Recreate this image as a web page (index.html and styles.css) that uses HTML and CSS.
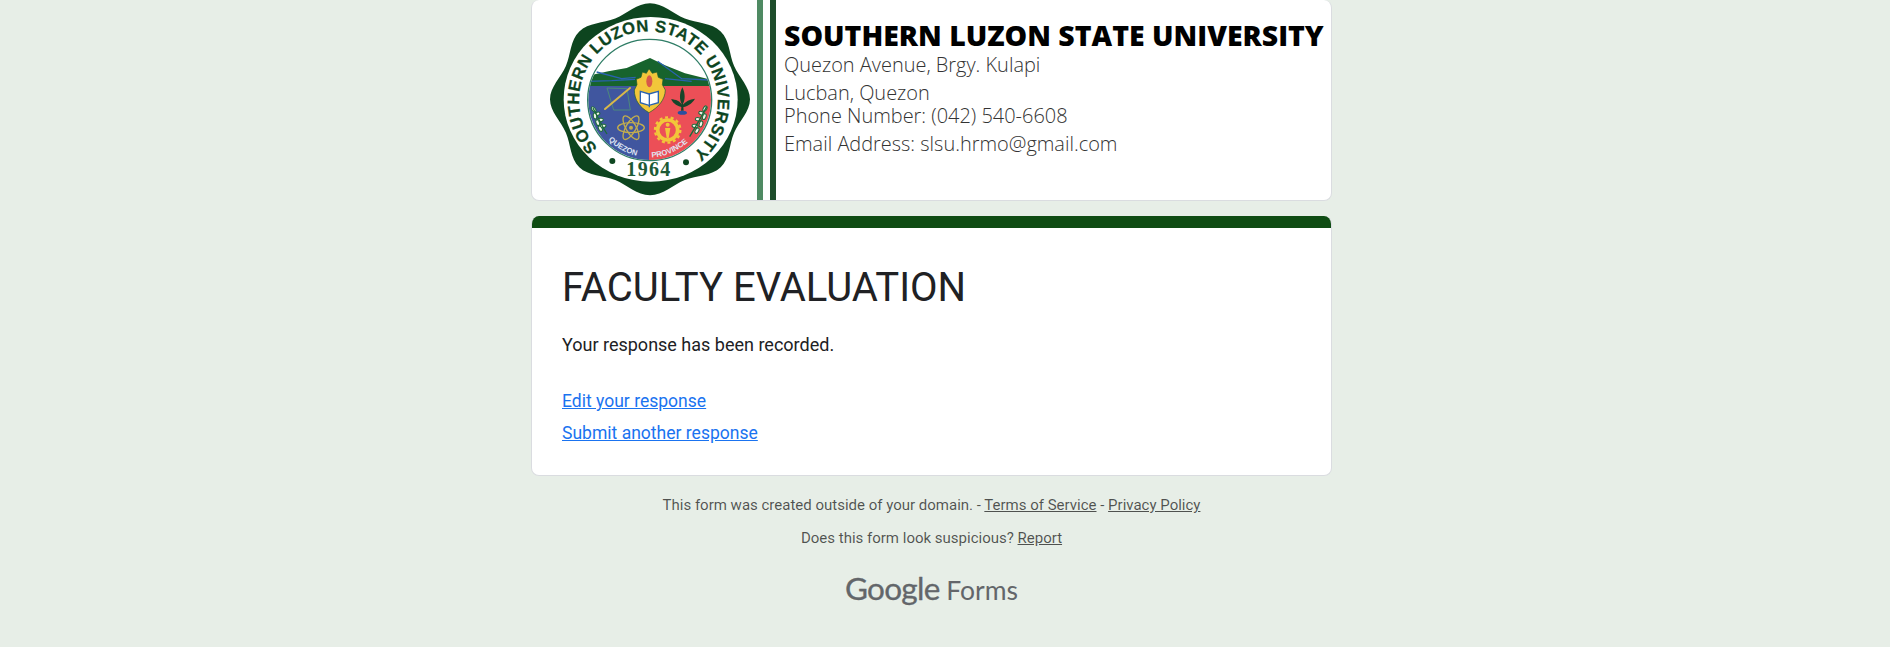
FILE: index.html
```html
<!DOCTYPE html>
<html lang="en">
<head>
    <meta charset="UTF-8">
    <meta name="viewport" content="width=device-width, initial-scale=1.0">
    <title>FACULTY EVALUATION</title>
    <link rel="stylesheet" href="styles.css">
</head>
<body>
    <div class="page">
        <header class="banner">
            <svg class="seal" viewBox="60 0 630 600" width="210" height="200" aria-label="University seal">
                <defs>
                    <clipPath id="shieldClip"><ellipse cx="374" cy="300" rx="184" ry="180"/></clipPath>
                    <path id="nameArc" d="M218 444 A208 208 0 1 1 496 468"/>
                    <path id="quezonArc" d="M250 420 A174 174 0 0 0 352 470"/>
                    <path id="provinceArc" d="M380 472 A172 172 0 0 0 502 412"/>
                    <ellipse id="leaf" rx="9" ry="5" fill="#eef3e8" stroke="#1c6b3a" stroke-width="3"/>
                </defs>
                <path class="seal-edge" transform="translate(375 298) scale(3 2.88)" d="M0 -100 C13 -100 22.8 -89.1 34.8 -84.1 C46.8 -79.1 61.5 -79.9 70.7 -70.7 C79.9 -61.5 79.1 -46.8 84.1 -34.8 C89.1 -22.8 100 -13 100 0 C100 13 89.1 22.8 84.1 34.8 C79.1 46.8 79.9 61.5 70.7 70.7 C61.5 79.9 46.8 79.1 34.8 84.1 C22.8 89.1 13 100 0 100 C-13 100 -22.8 89.1 -34.8 84.1 C-46.8 79.1 -61.5 79.9 -70.7 70.7 C-79.9 61.5 -79.1 46.8 -84.1 34.8 C-89.1 22.8 -100 13 -100 0 C-100 -13 -89.1 -22.8 -84.1 -34.8 C-79.1 -46.8 -79.9 -61.5 -70.7 -70.7 C-61.5 -79.9 -46.8 -79.1 -34.8 -84.1 C-22.8 -89.1 -13 -100 0 -100 Z"/>
                <ellipse cx="377" cy="298" rx="261" ry="247" fill="#fff"/>
                <text class="seal-name"><textPath href="#nameArc">SOUTHERN LUZON STATE UNIVERSITY</textPath></text>

                <g clip-path="url(#shieldClip)">
                    <rect x="180" y="110" width="390" height="150" fill="#fff"/>
                    <path fill="#17632d" d="M185 228 L250 214 L305 204 L375 174 L420 196 L480 220 L560 240 L560 262 L185 262 Z"/>
                    <path class="river" d="M215 216 L290 236 L332 232 M190 244 L260 242 L330 238"/>
                    <path class="river" d="M398 184 L470 236 L552 240 M420 236 L500 244"/>
                    <rect x="180" y="258" width="192" height="230" fill="#40569f"/>
                    <rect x="372" y="258" width="192" height="230" fill="#ec4f57"/>
                </g>
                <ellipse cx="374" cy="300" rx="186" ry="182" fill="none" stroke="#2f7d66" stroke-width="4"/>

                <!-- drafting tools -->
                <path d="M246 264 L306 266 L316 330 L266 330 Z" fill="none" stroke="#4d8a7a" stroke-width="3"/>
                <path d="M240 327 L315 264" stroke="#d9b84a" stroke-width="6" stroke-linecap="round"/>

                <!-- atom -->
                <g fill="none" stroke="#c2ad4e" stroke-width="4">
                    <ellipse cx="318" cy="383" rx="40" ry="15"/>
                    <ellipse cx="318" cy="383" rx="40" ry="15" transform="rotate(60 318 383)"/>
                    <ellipse cx="318" cy="383" rx="40" ry="15" transform="rotate(120 318 383)"/>
                </g>
                <circle cx="318" cy="383" r="6" fill="#c2ad4e"/>

                <!-- laurels -->
                <g>
                    <use href="#leaf" transform="translate(206 328) rotate(50)"/>
                    <use href="#leaf" transform="translate(216 342) rotate(-20)"/>
                    <use href="#leaf" transform="translate(210 348) rotate(80)"/>
                    <use href="#leaf" transform="translate(226 360) rotate(-10)"/>
                    <use href="#leaf" transform="translate(218 368) rotate(70)"/>
                    <use href="#leaf" transform="translate(234 378) rotate(-10)"/>
                    <use href="#leaf" transform="translate(226 386) rotate(60)"/>
                    <path d="M204 324 C218 350 232 380 246 402" fill="none" stroke="#1c6b3a" stroke-width="4"/>
                </g>
                <g>
                    <use href="#leaf" transform="translate(540 326) rotate(-60)"/>
                    <use href="#leaf" transform="translate(530 340) rotate(20)"/>
                    <use href="#leaf" transform="translate(538 350) rotate(-70)"/>
                    <use href="#leaf" transform="translate(520 358) rotate(10)"/>
                    <use href="#leaf" transform="translate(528 372) rotate(-70)"/>
                    <use href="#leaf" transform="translate(510 378) rotate(10)"/>
                    <use href="#leaf" transform="translate(516 392) rotate(-60)"/>
                    <path d="M545 320 C530 350 512 380 494 410" fill="none" stroke="#1c6b3a" stroke-width="4"/>
                </g>

                <!-- medallion -->
                <path fill="#f2c63a" stroke="#1c5a2d" stroke-width="2" d="M372 206 L382 220 L396 216 L400 232 L414 238 L412 254 L421 270 C420 300 400 322 372 338 C344 322 328 300 328 270 L336 254 L334 238 L348 232 L352 216 L364 220 Z"/>
                <ellipse cx="373" cy="244" rx="9" ry="18" fill="#d8584a"/>
                <path fill="#fff" stroke="#2a62b0" stroke-width="4" d="M346 274 L372 282 L400 274 L400 308 L372 316 L346 308 Z"/>
                <path d="M373 282 L373 322" stroke="#2a62b0" stroke-width="4"/>

                <!-- tree -->
                <path fill="#16452a" d="M472 262 C482 282 480 300 474 312 L476 332 L468 332 L470 312 C464 300 462 282 472 262 Z"/>
                <path fill="#16452a" d="M438 298 C452 298 466 304 472 316 C482 304 494 298 510 296 C500 312 486 320 472 322 C458 320 446 312 438 298 Z"/>
                <ellipse cx="472" cy="338" rx="14" ry="6" fill="#2a4f9e"/>

                <!-- gear -->
                <circle cx="428" cy="390" r="30" fill="none" stroke="#f2c63a" stroke-width="11"/>
                <circle cx="428" cy="390" r="38" fill="none" stroke="#f2c63a" stroke-width="7" stroke-dasharray="9 8"/>
                <circle cx="428" cy="374" r="6" fill="#f2c63a"/>
                <path d="M420 384 L436 384 L431 414 L425 414 Z" fill="#f2c63a"/>

                <text class="seal-place"><textPath href="#quezonArc">QUEZON</textPath></text>
                <text class="seal-place"><textPath href="#provinceArc">PROVINCE</textPath></text>

                <circle cx="262" cy="483" r="9" fill="#0f4721"/>
                <circle cx="483" cy="487" r="9" fill="#0f4721"/>
                <text class="seal-year" x="372" y="529">1964</text>
            </svg>
            <div class="stripes">
                <span class="stripe stripe-light"></span>
                <span class="stripe stripe-dark"></span>
            </div>
            <div class="banner-text">
                <h2 class="school">SOUTHERN LUZON STATE UNIVERSITY</h2>
                <p class="addr addr-1">Quezon Avenue, Brgy. Kulapi</p>
                <p class="addr addr-2">Lucban, Quezon</p>
                <p class="addr addr-3">Phone Number: (042) 540-6608</p>
                <p class="addr addr-4">Email Address: slsu.hrmo@gmail.com</p>
            </div>
        </header>

        <main class="card">
            <div class="card-band"></div>
            <div class="card-body">
                <h1 class="form-title">FACULTY EVALUATION</h1>
                <p class="confirm">Your response has been recorded.</p>
                <div class="links">
                    <a href="#">Edit your response</a>
                    <a href="#">Submit another response</a>
                </div>
            </div>
        </main>

        <footer class="foot">
            <p>This form was created outside of your domain. - <a href="#">Terms of Service</a> - <a href="#">Privacy Policy</a></p>
            <p>Does this form look suspicious? <a href="#">Report</a></p>
            <div class="brand"><span class="brand-g">Google</span> <span class="brand-f">Forms</span></div>
        </footer>
    </div>
</body>
</html>
```

FILE: styles.css
```css
html, body { margin: 0; padding: 0; }
body { background: #e7eee7; font-family: Roboto, sans-serif; color: #202124; overflow: hidden; }
.page { width: 801px; margin-left: 531px; }

.banner { display: flex; height: 201px; box-sizing: border-box; background: #fff; border: 1px solid #dadce0; border-top: 0; border-radius: 8px; overflow: hidden; }
.seal { flex: none; margin-left: 13px; }
.stripes { display: flex; flex: none; gap: 7px; margin-left: 2px; margin-right: 8px; }
.stripe { display: block; height: 100%; }
.stripe-light { width: 6px; background: #4f8a63; }
.stripe-dark { width: 6px; background: #1e4d2b; }
.banner-text { font-family: "Open Sans", sans-serif; color: #333; }
.school { margin: 17px 0 0; font-size: 28.45px; line-height: 36px; font-weight: 800; color: #000; white-space: nowrap; }
.addr { margin: 0; font-size: 19.95px; font-weight: 300; line-height: 28px; white-space: nowrap; }
.addr-1 { margin-top: -2px; }
.addr-3 { margin-top: -5px; }

.card { margin-top: 15px; height: 260px; box-sizing: border-box; background: #fff; border: 1px solid #dadce0; border-top: 0; border-radius: 8px; overflow: hidden; }
.card-band { height: 12px; margin: 0 -1px; background: #0f4c13; }
.card-body { padding: 36px 30px 0; }
.form-title { margin: 0; font-size: 40px; font-weight: 400; line-height: 48px; }
.confirm { margin: 21px 0 0; font-size: 18px; line-height: 24px; }
.links { margin-top: 32px; display: flex; flex-direction: column; gap: 8px; }
.links a { font-size: 17.55px; line-height: 24px; color: #1a73f0; }

.foot { margin-top: 19px; text-align: center; font-size: 15px; color: rgba(0, 0, 0, .66); }
.foot p { margin: 0 0 13px; line-height: 20px; }
.foot a { color: rgba(0, 0, 0, .66); }
.brand { margin-top: 22px; font-size: 26.5px; line-height: 36px; color: #63666a; white-space: nowrap; }
.brand-g { font-family: Lato, sans-serif; font-size: 31.5px; letter-spacing: -.7px; -webkit-text-stroke: .3px #63666a; }
.brand-f { font-family: Lato, sans-serif; }

.seal-edge { fill: #0d451f; }
.seal-name { font-family: "Liberation Sans", sans-serif; font-weight: 700; font-size: 50px; letter-spacing: 1.3px; fill: #0d451f; stroke: #0d451f; stroke-width: .8px; }
.seal-place { font-family: "Liberation Sans", sans-serif; font-weight: 700; font-size: 23px; fill: #dfe6f5; }
.seal-year { font-family: "Liberation Serif", serif; font-size: 60px; font-weight: 700; letter-spacing: 4px; text-anchor: middle; fill: #1d5a35; }
.river { fill: none; stroke: #2a62b0; stroke-width: 4; }
```
